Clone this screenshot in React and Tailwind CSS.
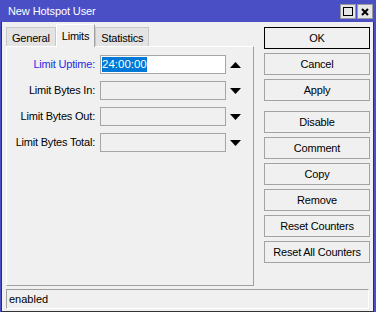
import React from "react";

const font = { fontFamily: '"Liberation Sans", Arial, sans-serif' };

const fields = [
  { label: "Limit Uptime:", value: "24:00:00", active: true },
  { label: "Limit Bytes In:" },
  { label: "Limit Bytes Out:" },
  { label: "Limit Bytes Total:" },
];

const buttons = [
  { label: "OK", primary: true },
  { label: "Cancel" },
  { label: "Apply", gapAfter: true },
  { label: "Disable" },
  { label: "Comment" },
  { label: "Copy" },
  { label: "Remove" },
  { label: "Reset Counters" },
  { label: "Reset All Counters" },
];

const Arrow = ({ up }) => (
  <svg width="11" height="6" viewBox="0 0 11 6" className="shrink-0">
    {up ? <polygon points="0,6 11,6 5.5,0" fill="#000" /> : <polygon points="0,0 11,0 5.5,6" fill="#000" />}
  </svg>
);

const Tab = ({ label, selected }) => (
  <div
    className={
      selected
        ? "relative z-10 -mb-[1px] h-[23px] px-[5px] pt-[3px] bg-[#f0f0f0] border border-b-0 border-t-white border-l-white border-r-[#a0a0a0] text-[11px] tracking-[-0.2px] text-black"
        : "h-[19px] px-[5px] pt-[2px] bg-[#e3e3e3] border border-b-0 border-[#c8c8c8] text-[11px] tracking-[-0.2px] text-black"
    }
  >
    {label}
  </div>
);

export default function App() {
  return (
    <div className="w-[377px] h-[316px] bg-white" style={font}>
      <div className="w-[376px] h-[312px] flex flex-col bg-[#4b4fc6]">
        <div className="h-[22px] flex items-center justify-between pl-[8px] pr-[3px]">
          <span className="text-white text-[11px] tracking-[-0.1px] leading-none">New Hotspot User</span>
          <div className="flex gap-[1px] pt-[1px]">
            <div className="w-[16px] h-[15px] bg-[#e6e6e6] border border-[#9a9a9a] flex items-center justify-center">
              <div className="w-[10px] h-[9px] border-[1.5px] border-black" />
            </div>
            <div className="w-[16px] h-[15px] bg-[#e6e6e6] border border-[#9a9a9a] flex items-center justify-center">
              <svg width="8" height="8" viewBox="0 0 8 8">
                <path d="M1 1 L7 7 M7 1 L1 7" stroke="#000" strokeWidth="2" />
              </svg>
            </div>
          </div>
        </div>
        <div className="flex-1 flex flex-col bg-[#f0f0f0] border border-t-0 border-[#333] ml-[1px] mr-[2px]">
          <div className="flex flex-1 min-h-0">
            <div className="w-[252px] pl-[4px] pt-[1px] flex flex-col">
              <div className="flex items-end h-[23px]">
                <Tab label="General" />
                <Tab label="Limits" selected />
                <Tab label="Statistics" />
              </div>
              <div className="flex-1 mb-[3px] border border-t-white border-l-white border-r-[#a0a0a0] border-b-[#a0a0a0] flex flex-col gap-[7px] pt-[8px]">
                {fields.map((f) => (
                  <div key={f.label} className="flex items-center h-[19px]">
                    <span
                      className={
                        "w-[88px] text-right text-[11px] tracking-[-0.2px] whitespace-nowrap " +
                        (f.active ? "text-[#2a2ae6]" : "text-black")
                      }
                    >
                      {f.label}
                    </span>
                    <div
                      className={
                        "ml-[5px] w-[126px] h-[19px] border border-[#a5a5a5] flex items-center px-[1px] " +
                        (f.active ? "bg-white" : "bg-[#f0f0f0]")
                      }
                    >
                      {f.value && (
                        <span className="bg-[#0078d7] text-white text-[11.5px] leading-[15px]">{f.value}</span>
                      )}
                    </div>
                    <div className="ml-[4px]">
                      <Arrow up={f.active} />
                    </div>
                  </div>
                ))}
              </div>
            </div>
            <div className="ml-[10px] w-[106px] pt-[5px] flex flex-col">
              {buttons.map((b) => (
                <div
                  key={b.label}
                  className={
                    "h-[22px] flex items-center justify-center text-[11px] tracking-[-0.2px] text-black bg-[#f0f0f0] border " +
                    (b.primary ? "border-black border-[1.5px]" : "border-[#a3a3a3]") +
                    (b.gapAfter ? " mb-[10px]" : " mb-[4px]")
                  }
                >
                  {b.label}
                </div>
              ))}
            </div>
          </div>
          <div className="h-[20px] mx-[4px] mb-[2px] border border-t-[#a0a0a0] border-l-[#a0a0a0] border-r-white border-b-white flex items-center px-[2px] text-[11px] text-black">
            enabled
          </div>
        </div>
      </div>
    </div>
  );
}
